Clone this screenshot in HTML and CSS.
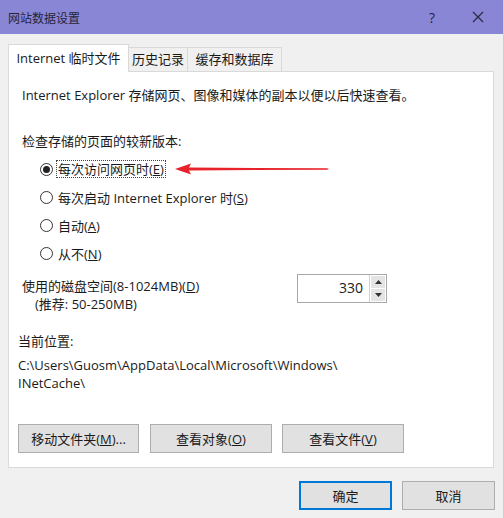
FILE: index.html
```html
<!DOCTYPE html>
<html lang="zh-CN">
<head>
<meta charset="utf-8">
<title>网站数据设置</title>
<link rel="stylesheet" href="styles.css">
</head>
<body>
<div class="window">
  <div class="titlebar">
    <span class="title">网站数据设置</span>
    <span class="tb-help">?</span>
    <span class="tb-close">
      <svg width="12" height="12" viewBox="0 0 12 12"><path d="M1 1L11 11M11 1L1 11" stroke="#2b2b40" stroke-width="1.3" fill="none"/></svg>
    </span>
  </div>
  <div class="tabs">
    <div class="tab active">Internet 临时文件</div>
    <div class="tab">历史记录</div>
    <div class="tab">缓存和数据库</div>
  </div>
  <div class="panel">
    <p class="desc">Internet Explorer 存储网页、图像和媒体的副本以便以后快速查看。</p>
    <p class="heading">检查存储的页面的较新版本:</p>
    <div class="radios">
      <div class="radio-row"><span class="radio checked"></span><span class="focus">每次访问网页时(<u>E</u>)</span></div>
      <div class="radio-row"><span class="radio"></span><span class="rlabel">每次启动 Internet Explorer 时(<u>S</u>)</span></div>
      <div class="radio-row"><span class="radio"></span><span class="rlabel">自动(<u>A</u>)</span></div>
      <div class="radio-row"><span class="radio"></span><span class="rlabel">从不(<u>N</u>)</span></div>
    </div>
    <div class="disk">
      <div class="disk-label">
        <div>使用的磁盘空间(8-1024MB)(<u>D</u>)</div>
        <div class="rec">(推荐: 50-250MB)</div>
      </div>
      <div class="spin">
        <div class="spin-value">330</div>
        <div class="spin-btns">
          <div class="spin-btn"><svg width="7" height="4" viewBox="0 0 7 4"><path d="M0 4L3.5 0L7 4Z" fill="#333"/></svg></div>
          <div class="spin-btn"><svg width="7" height="4" viewBox="0 0 7 4"><path d="M0 0L3.5 4L7 0Z" fill="#333"/></svg></div>
        </div>
      </div>
    </div>
    <p class="loc-title">当前位置:</p>
    <p class="path">C:\Users\Guosm\AppData\Local\Microsoft\Windows\<br>INetCache\</p>
    <div class="actions">
      <button class="btn w1">移动文件夹(<u>M</u>)...</button>
      <button class="btn w2">查看对象(<u>O</u>)</button>
      <button class="btn w3">查看文件(<u>V</u>)</button>
    </div>
  </div>
  <div class="footer">
    <button class="btn fbtn primary">确定</button>
    <button class="btn fbtn">取消</button>
  </div>
  <svg class="arrow" width="160" height="14" viewBox="0 0 160 14">
    <path d="M0 7L16 1.5L14 5.6L152 6.2L154 7L152 7.8L14 8.4L16 12.5Z" fill="#e8222a"/>
  </svg>
</div>
</body>
</html>
```
FILE: styles.css
```css
* { box-sizing: border-box; }
html, body { margin: 0; padding: 0; }
body {
  width: 504px;
  height: 518px;
  background: #f0f0f0;
  font-family: "Open Sans", "Noto Sans CJK SC", sans-serif;
  font-size: 13px;
  color: #1a1a1a;
}
.window {
  position: relative;
  width: 504px;
  height: 518px;
  background: #f0f0f0;
  border-right: 1px solid #cfcfcf;
}
.titlebar {
  height: 34px;
  background: #8a86d6;
  display: flex;
  align-items: center;
  padding-left: 8px;
}
.title {
  font-family: "Noto Sans CJK SC", sans-serif;
  font-size: 12px;
  color: #25253a;
  flex: 1;
}
.tb-help {
  width: 46px;
  text-align: center;
  font-size: 14px;
  color: #25253a;
}
.tb-close {
  width: 46px;
  height: 34px;
  display: flex;
  align-items: center;
  justify-content: center;
  margin-right: 2px;
}
.tabs {
  display: flex;
  align-items: flex-end;
  padding-left: 8px;
  height: 37px;
}
.tab {
  height: 24px;
  line-height: 22px;
  padding: 0;
  text-align: center;
  white-space: nowrap;
  border: 1px solid #d9d9d9;
  border-bottom: none;
  background: #f0f0f0;
  font-family: "Noto Sans CJK SC", sans-serif;
  font-size: 13px;
  color: #1a1a1a;
}
.tab + .tab { border-left: none; }
.tab.active {
  height: 28px;
  line-height: 26px;
  background: #fff;
  margin-bottom: -1px;
  position: relative;
  z-index: 1;
  width: 121px;
  font-family: "Open Sans", "Noto Sans CJK SC", sans-serif;
}
.tab:nth-child(2) { width: 59px; }
.tab:nth-child(3) { width: 94px; }
.panel {
  margin-left: 8px;
  width: 486px;
  height: 397px;
  background: #fff;
  border: 1px solid #d9d9d9;
  padding: 14px 14px 0 13px;
}
p { margin: 0; }
.desc, .heading, .loc-title, .path, .disk-label div {
  line-height: 18px;
}
.heading { margin-top: 28px; }
.radios { margin-top: 5px; padding-left: 18px; }
.radio-row {
  height: 28px;
  display: flex;
  align-items: center;
}
.radio {
  width: 13px;
  height: 13px;
  border: 1px solid #333;
  border-radius: 50%;
  margin-right: 3px;
  display: flex;
  align-items: center;
  justify-content: center;
  flex: none;
}
.radio.checked::after {
  content: "";
  width: 7px;
  height: 7px;
  border-radius: 50%;
  background: #222;
}
.focus {
  border: 1px dotted #444;
  padding: 0 1px;
  line-height: 16px;
}
.rlabel { padding-left: 2px; }
.disk {
  margin-top: 10px;
  display: flex;
  align-items: flex-start;
}
.disk-label { width: 275px; }
.rec { padding-left: 13px; }
.spin {
  margin-top: -3px;
  width: 90px;
  height: 29px;
  border: 1px solid #a8a8a8;
  display: flex;
  background: #fff;
}
.spin-value {
  flex: 1;
  text-align: right;
  padding-right: 6px;
  line-height: 26px;
  font-size: 14px;
  color: #222;
}
.spin-btns {
  width: 17px;
  display: flex;
  flex-direction: column;
  border-left: 1px solid #d0d0d0;
  padding: 1px;
  gap: 1px;
}
.spin-btn {
  flex: 1;
  background: #e4e4e4;
  display: flex;
  align-items: center;
  justify-content: center;
}
.loc-title { margin-top: 19px; margin-left: -4px; }
.path { margin-top: 6px; margin-left: -4px; }
.actions {
  margin-top: 32px;
  margin-left: -4px;
  display: flex;
  gap: 11px;
}
.btn {
  height: 29px;
  background: #e1e1e1;
  border: 1px solid #adadad;
  font-family: "Open Sans", "Noto Sans CJK SC", sans-serif;
  font-size: 13px;
  color: #1a1a1a;
  padding: 0;
  margin: 0;
}
.actions .w1 { width: 121px; }
.actions .w2 { width: 122px; }
.actions .w3 { width: 122px; margin-left: -1px; }
.footer {
  display: flex;
  justify-content: flex-end;
  gap: 10px;
  margin-top: 13px;
  padding-right: 8px;
}
.fbtn { width: 93px; }
.fbtn.primary {
  border: 1px solid #0078d7;
  box-shadow: inset 0 0 0 1px #0078d7;
}
.arrow {
  position: absolute;
  left: 175px;
  top: 162px;
}
```
